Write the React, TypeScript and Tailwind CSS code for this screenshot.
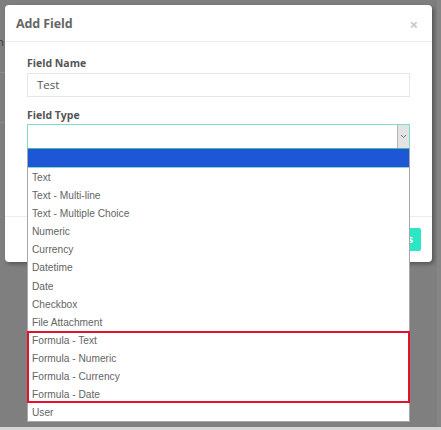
import React from "react";

const options = [
  "Text",
  "Text - Multi-line",
  "Text - Multiple Choice",
  "Numeric",
  "Currency",
  "Datetime",
  "Date",
  "Checkbox",
  "File Attachment",
];
const formulas = ["Formula - Text", "Formula - Numeric", "Formula - Currency", "Formula - Date"];

function Opt({ label }: { label: string }) {
  return (
    <div className="h-[18.1px] pl-[4px] pt-[2px] flex items-center text-[10.2px] text-[#646464] leading-none whitespace-nowrap">
      {label}
    </div>
  );
}

export default function App() {
  return (
    <div
      className="relative w-[441px] h-[430px] overflow-hidden bg-[#7f7f7f]"
      style={{ fontFamily: '"Open Sans", "Liberation Sans", sans-serif' }}
    >
      {/* faint background page details */}
      <div className="absolute left-0 top-[36px] text-[11px] text-[#3a3a3a] leading-none">
        <span className="relative -left-[3px]">n</span>
      </div>
      <div className="absolute left-0 top-[72px] w-[5px] h-px bg-[#8c8c8c]" />
      <div className="absolute left-0 top-[122px] w-[5px] h-px bg-[#8c8c8c]" />
      <div className="absolute right-0 top-0 w-[4px] h-full bg-[#858585]" />
      <div className="absolute left-0 bottom-0 w-full h-[3px] bg-[#d6d6d6]" />

      <div className="pt-[5px] pl-[5px]">
        {/* Modal */}
        <div className="w-[427px] h-[257px] bg-white rounded-[4px] shadow-[2px_2px_4px_rgba(0,0,0,0.35)] flex flex-col">
          <div className="h-[37px] shrink-0 border-b border-[#ececec] flex items-center justify-between pl-[11px] pr-[14px] pt-[2px]">
            <span className="text-[12.5px] font-bold text-[#666] tracking-[-0.1px]">Add Field</span>
            <span className="text-[15px] font-bold text-[#c8c8c8] leading-none">×</span>
          </div>
          <div className="h-[174px] shrink-0 px-[22px] pt-[14px] flex flex-col">
            <div className="text-[10.5px] font-bold text-[#555] leading-[14px] mb-[3px]">Field Name</div>
            <div className="h-[24px] w-[383px] border border-[#e6e6e6] flex items-center pl-[9px] text-[11.5px] text-[#555]">
              Test
            </div>
            <div className="text-[10.5px] font-bold text-[#555] leading-[14px] mt-[11px] mb-[2px]">Field Type</div>
            <div className="h-[25px] w-[383px] border border-[#80dcc8] border-b-[#45b9a6] flex justify-end">
              <div className="w-[12px] h-full bg-[#e3e3e3] border-l border-[#b5b5b5] flex items-center justify-center">
                <svg width="7" height="5" viewBox="0 0 7 5">
                  <path d="M1 1 L3.5 3.5 L6 1" stroke="#777" strokeWidth="1" fill="none" />
                </svg>
              </div>
            </div>
          </div>
          <div className="flex-1 border-t border-[#ececec] flex justify-end items-start pt-[11px] pr-[11px]">
            <div className="h-[23px] px-[8px] rounded-[2px] bg-[#2de6c3] text-white text-[11px] font-bold flex items-center">
              Save Fields
            </div>
          </div>
        </div>
      </div>

      {/* Dropdown list (open menu over the modal) */}
      <div
        className="absolute left-[27px] top-[149px] w-[383px] bg-white border border-t-0 border-[#a8a8a8]"
        style={{ fontFamily: '"Liberation Sans", Arial, sans-serif' }}
      >
        <div className="h-[19px] bg-[#1e57d6] border-b border-[#7fd8d0]" />
        {options.map((o) => (
          <Opt key={o} label={o} />
        ))}
        <div className="ring-2 ring-inset ring-[#e8102c] -mx-px px-px">
          {formulas.map((o) => (
            <Opt key={o} label={o} />
          ))}
        </div>
        <Opt label="User" />
      </div>
    </div>
  );
}
